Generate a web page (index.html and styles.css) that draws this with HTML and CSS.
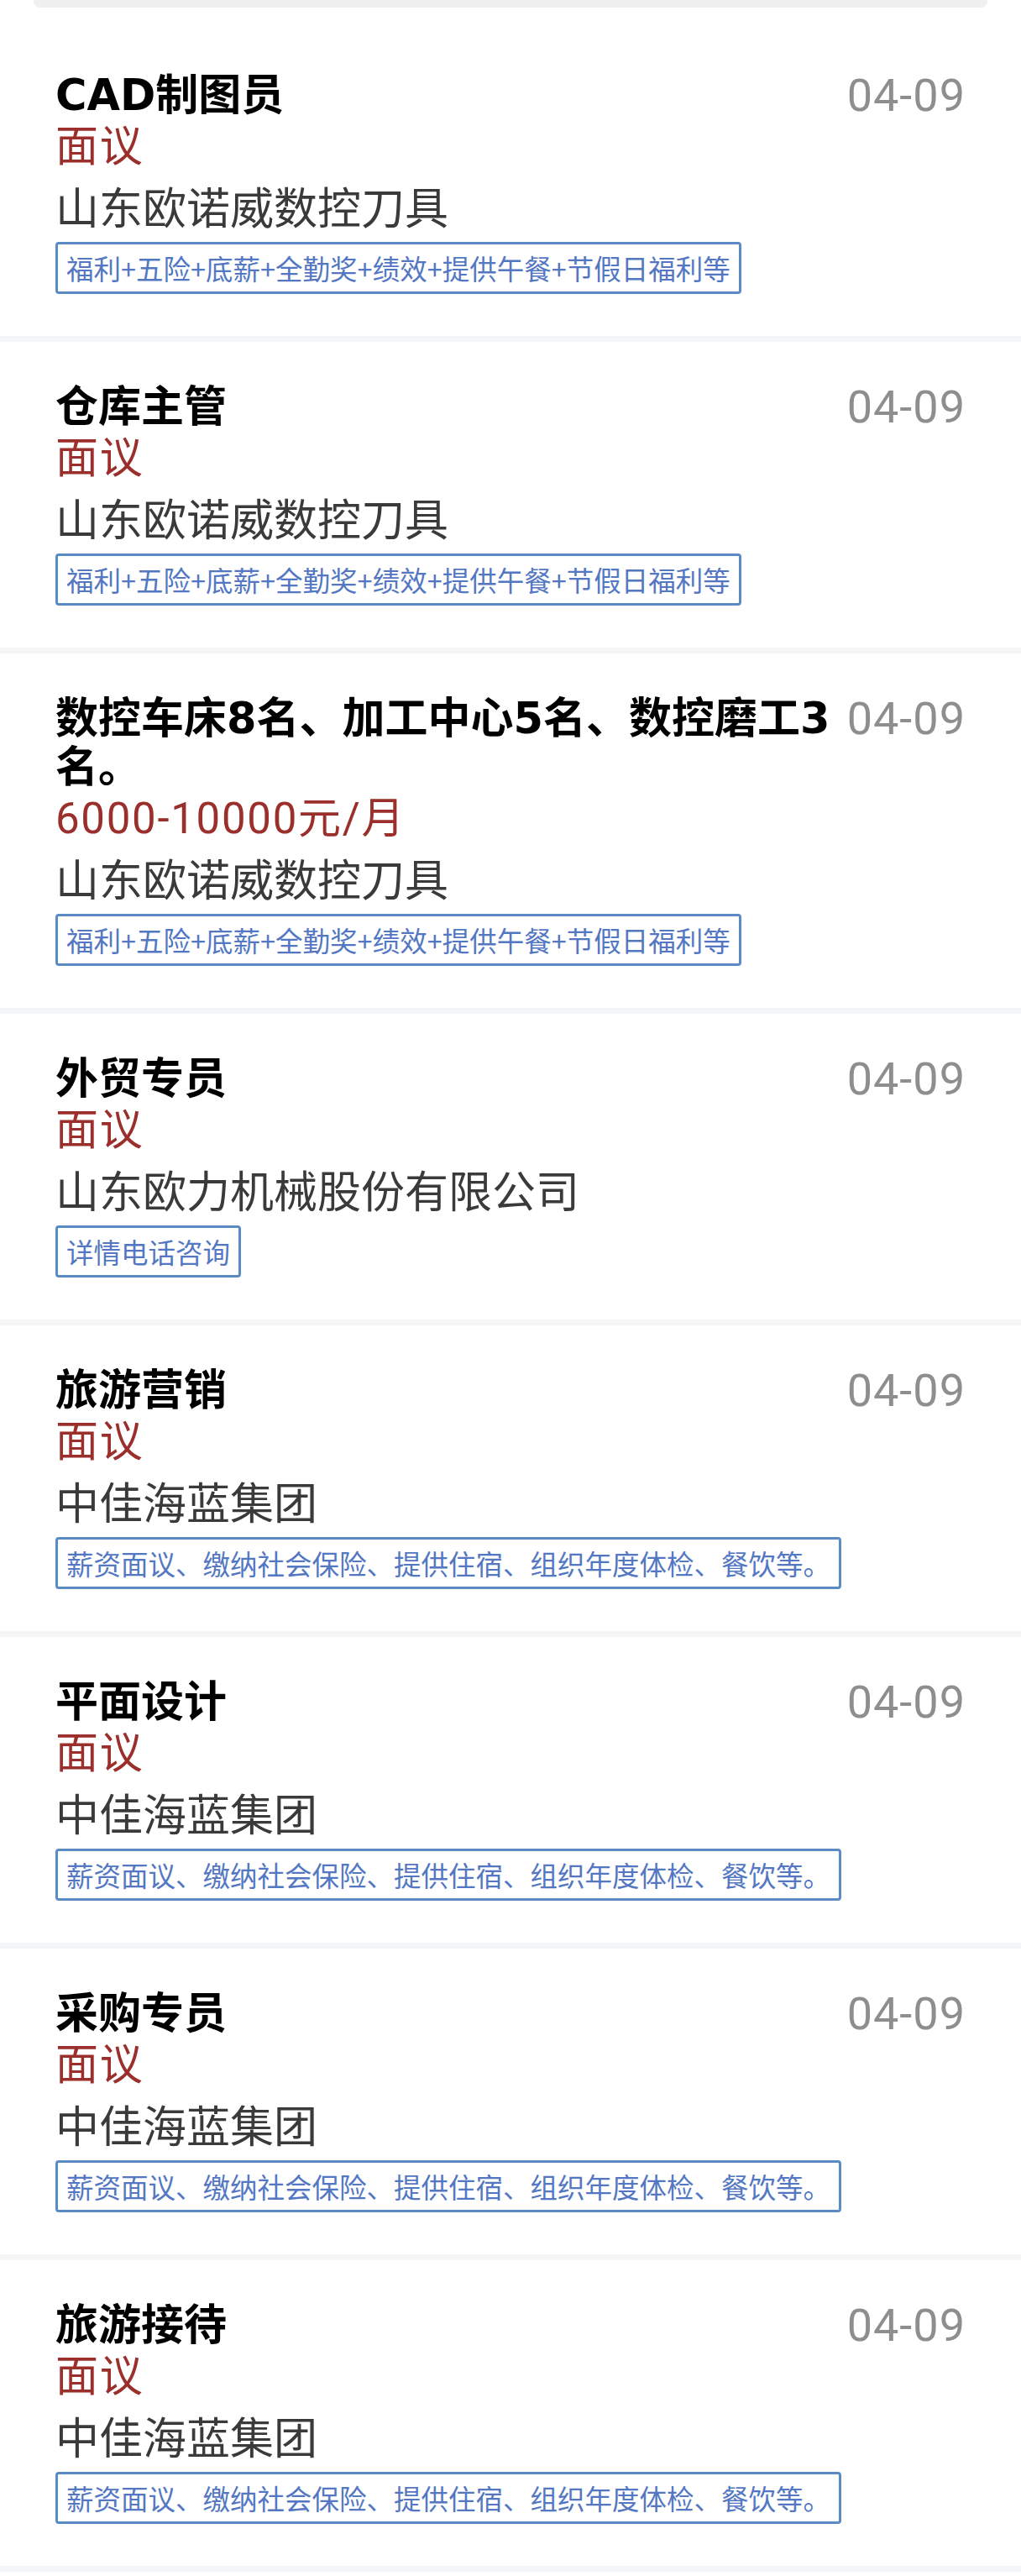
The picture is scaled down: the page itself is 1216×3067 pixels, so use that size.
FILE: index.html
```html
<!DOCTYPE html>
<html lang="zh-CN">
<head>
<meta charset="utf-8">
<title>职位列表</title>
<link rel="stylesheet" href="styles.css">
</head>
<body>
<div class="topbar"></div>
<ul class="jobs">
  <li class="job">
    <div class="head"><h3 class="title">CAD制图员</h3><span class="date">04-09</span></div>
    <p class="salary">面议</p>
    <p class="company">山东欧诺威数控刀具</p>
    <span class="tag">福利+五险+底薪+全勤奖+绩效+提供午餐+节假日福利等</span>
  </li>
  <li class="job">
    <div class="head"><h3 class="title">仓库主管</h3><span class="date">04-09</span></div>
    <p class="salary">面议</p>
    <p class="company">山东欧诺威数控刀具</p>
    <span class="tag">福利+五险+底薪+全勤奖+绩效+提供午餐+节假日福利等</span>
  </li>
  <li class="job">
    <div class="head"><h3 class="title">数控车床8名、加工中心5名、数控磨工3名。</h3><span class="date">04-09</span></div>
    <p class="salary">6000-10000元/月</p>
    <p class="company">山东欧诺威数控刀具</p>
    <span class="tag">福利+五险+底薪+全勤奖+绩效+提供午餐+节假日福利等</span>
  </li>
  <li class="job">
    <div class="head"><h3 class="title">外贸专员</h3><span class="date">04-09</span></div>
    <p class="salary">面议</p>
    <p class="company">山东欧力机械股份有限公司</p>
    <span class="tag">详情电话咨询</span>
  </li>
  <li class="job">
    <div class="head"><h3 class="title">旅游营销</h3><span class="date">04-09</span></div>
    <p class="salary">面议</p>
    <p class="company">中佳海蓝集团</p>
    <span class="tag">薪资面议、缴纳社会保险、提供住宿、组织年度体检、餐饮等。</span>
  </li>
  <li class="job">
    <div class="head"><h3 class="title">平面设计</h3><span class="date">04-09</span></div>
    <p class="salary">面议</p>
    <p class="company">中佳海蓝集团</p>
    <span class="tag">薪资面议、缴纳社会保险、提供住宿、组织年度体检、餐饮等。</span>
  </li>
  <li class="job">
    <div class="head"><h3 class="title">采购专员</h3><span class="date">04-09</span></div>
    <p class="salary">面议</p>
    <p class="company">中佳海蓝集团</p>
    <span class="tag">薪资面议、缴纳社会保险、提供住宿、组织年度体检、餐饮等。</span>
  </li>
  <li class="job">
    <div class="head"><h3 class="title">旅游接待</h3><span class="date">04-09</span></div>
    <p class="salary">面议</p>
    <p class="company">中佳海蓝集团</p>
    <span class="tag">薪资面议、缴纳社会保险、提供住宿、组织年度体检、餐饮等。</span>
  </li>
</ul>
</body>
</html>
```
FILE: styles.css
```css
html, body {
  margin: 0;
  padding: 0;
  background: #ffffff;
}

body {
  font-family: "Noto Sans CJK SC", "Noto Sans", sans-serif;
  color: #333333;
}

.topbar {
  height: 9px;
  margin: 0 40px 27px;
  background: #f0f0f0;
  border-radius: 0 0 8px 8px;
}

.jobs {
  list-style: none;
  margin: 0;
  padding: 0;
}

.job {
  padding: 49px 66px 50px;
  border-bottom: 7px solid #f4f5f7;
}

.head {
  display: flex;
  align-items: flex-start;
  gap: 10px;
}

.title {
  flex: 1;
  min-width: 0;
  margin: 0;
  font-family: "DejaVu Sans", "Noto Sans CJK SC", sans-serif;
  font-size: 51px;
  font-weight: 700;
  line-height: 58px;
  color: #000000;
}

.date {
  flex: 0 0 142px;
  text-align: right;
  font-family: Roboto, "Noto Sans", sans-serif;
  font-size: 54px;
  letter-spacing: 1px;
  line-height: 58px;
  color: #8e8e8e;
}

.salary {
  margin: 0;
  font-family: Roboto, "Noto Sans CJK SC", sans-serif;
  font-size: 51px;
  letter-spacing: 1.7px;
  line-height: 64px;
  color: #9b2f2b;
}

.company {
  margin: 5px 0 0;
  font-size: 52px;
  line-height: 66px;
  color: #3a3a3a;
}

.tag {
  display: block;
  width: fit-content;
  margin-top: 10px;
  padding: 0 10px;
  border: 3px solid #5b8bc5;
  border-radius: 4px;
  font-size: 32.5px;
  line-height: 56px;
  color: #5377c2;
}
```
